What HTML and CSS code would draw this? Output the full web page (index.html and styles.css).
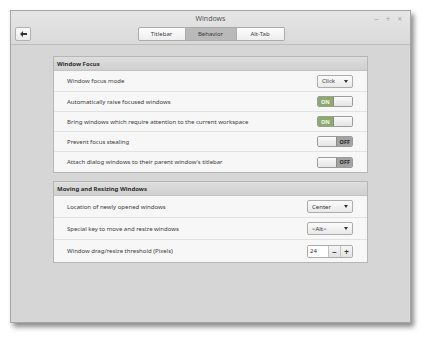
FILE: index.html
```html
<!DOCTYPE html>
<html lang="en">

    <head>
        <meta charset="UTF-8">
        <meta name="viewport" content="width=device-width, initial-scale=1.0">
        <title>Windows</title>
        <link rel="stylesheet" href="styles.css">
    </head>

    <body>
        <div id="window">
            <div id="header">
                <div class="title-row">
                    <span class="title">Windows</span>
                    <div class="wm-buttons">
                        <span>&minus;</span>
                        <span>+</span>
                        <span>&times;</span>
                    </div>
                </div>
                <div class="tool-row">
                    <button class="back-button">
                        <svg width="7" height="6" viewBox="0 0 7 6">
                            <path d="M0 3 L3 0 L3 2 L7 2 L7 4 L3 4 L3 6 Z" fill="#333"/>
                        </svg>
                    </button>
                    <div class="tabs">
                        <button class="tab">Titlebar</button>
                        <button class="tab active">Behavior</button>
                        <button class="tab">Alt-Tab</button>
                    </div>
                </div>
            </div>

            <div id="content">
                <div class="section">
                    <div class="section-title">Window Focus</div>
                    <div class="row tall">
                        <label>Window focus mode</label>
                        <div class="combo"><span>Click</span><span class="arrow"></span></div>
                    </div>
                    <div class="row">
                        <label>Automatically raise focused windows</label>
                        <div class="switch on"><span class="state">ON</span><span class="knob"></span></div>
                    </div>
                    <div class="row">
                        <label>Bring windows which require attention to the current workspace</label>
                        <div class="switch on"><span class="state">ON</span><span class="knob"></span></div>
                    </div>
                    <div class="row">
                        <label>Prevent focus stealing</label>
                        <div class="switch off"><span class="knob"></span><span class="state">OFF</span></div>
                    </div>
                    <div class="row">
                        <label>Attach dialog windows to their parent window's titlebar</label>
                        <div class="switch off"><span class="knob"></span><span class="state">OFF</span></div>
                    </div>
                </div>

                <div class="section">
                    <div class="section-title">Moving and Resizing Windows</div>
                    <div class="row wide">
                        <label>Location of newly opened windows</label>
                        <div class="combo long"><span>Center</span><span class="arrow"></span></div>
                    </div>
                    <div class="row wide">
                        <label>Special key to move and resize windows</label>
                        <div class="combo long"><span>&lt;Alt&gt;</span><span class="arrow"></span></div>
                    </div>
                    <div class="row wide">
                        <label>Window drag/resize threshold (Pixels)</label>
                        <div class="spin">
                            <span class="spin-value">24</span>
                            <span class="spin-button">&minus;</span>
                            <span class="spin-button">+</span>
                        </div>
                    </div>
                </div>
            </div>
        </div>
    </body>

</html>
```

FILE: styles.css
```css
html {
    height: 100%;
}

body {
    margin: 0px;
    width: 100%;
    height: 100%;
    overflow: hidden;
    background: #ffffff;
    font-family: "Noto Sans", sans-serif;
    font-size: 6px;
    color: #3a3a3a;
}

body * {
    box-sizing: border-box;
}

#window {
    display: flex;
    flex-direction: column;
    margin: 10px 0px 0px 10px;
    width: 401px;
    height: 313px;
    border: 1px solid #a6a6a6;
    background: #d6d6d6;
    box-shadow: 3px 4px 5px rgba(0, 0, 0, 0.45);
}

#header {
    height: 34px;
    background: linear-gradient(#e6e6e6, #d9d9d9);
    border-bottom: 1px solid #bdbdbd;
}

.title-row {
    position: relative;
    height: 15px;
    display: flex;
    align-items: center;
    justify-content: center;
}

.title {
    font-size: 7px;
    color: #555555;
}

.wm-buttons {
    position: absolute;
    right: 8px;
    top: 2px;
    display: flex;
    gap: 7px;
    font-size: 8px;
    color: #a4a4a4;
}

.tool-row {
    position: relative;
    height: 18px;
    display: flex;
    align-items: center;
    justify-content: center;
}

button {
    font: inherit;
    padding: 0px;
    margin: 0px;
    outline: none;
}

.back-button {
    position: absolute;
    left: 4px;
    top: 1px;
    width: 16px;
    height: 14px;
    display: flex;
    align-items: center;
    justify-content: center;
    border: 1px solid #b0b0b0;
    border-radius: 2px;
    background: linear-gradient(#fbfbfb, #ececec);
}

.tabs {
    display: flex;
    margin-top: -2px;
    margin-left: 1px;
}

.tab {
    width: 49px;
    height: 14px;
    border: 1px solid #ababab;
    border-left: none;
    background: linear-gradient(#fdfdfd, #eeeeee);
    color: #3c3c3c;
    font-size: 6px;
}

.tab:first-child {
    width: 48px;
    border-left: 1px solid #ababab;
    border-radius: 2px 0px 0px 2px;
}

.tab:last-child {
    width: 48px;
    border-radius: 0px 2px 2px 0px;
}

.tab.active {
    width: 51px;
    background: #b9b9b9;
    color: #3a3a3a;
}

#content {
    flex-grow: 1;
    padding: 11px 42px 0px 42px;
    display: flex;
    flex-direction: column;
    gap: 8px;
}

.section {
    border: 1px solid #b6b6b6;
    background: #f7f7f7;
}

.section-title {
    height: 14px;
    padding-left: 3px;
    display: flex;
    align-items: center;
    font-weight: bold;
    color: #2e2e2e;
    background: linear-gradient(#dedede, #d0d0d0);
    border-bottom: 1px solid #c4c4c4;
}

.row {
    height: 20px;
    display: flex;
    align-items: center;
    justify-content: space-between;
    padding: 0px 14px 0px 13px;
    border-bottom: 1px solid #e2e2e2;
}

.row:last-child {
    border-bottom: none;
}

.row.tall {
    height: 21px;
}

.row.wide {
    height: 22px;
}

.combo {
    width: 36px;
    height: 13px;
    display: flex;
    align-items: center;
    justify-content: space-between;
    padding: 0px 4px 0px 4px;
    border: 1px solid #acacac;
    border-radius: 2px;
    background: linear-gradient(#fbfbfb, #e9e9e9);
    color: #333333;
}

.combo.long {
    width: 46px;
}

.arrow {
    width: 0px;
    height: 0px;
    border-left: 2.5px solid transparent;
    border-right: 2.5px solid transparent;
    border-top: 3px solid #333333;
}

.switch {
    width: 36px;
    height: 11px;
    display: flex;
    border: 1px solid #9c9c9c;
    border-radius: 2px;
    overflow: hidden;
    font-weight: bold;
    font-size: 5.5px;
}

.switch .knob {
    width: 18px;
    background: linear-gradient(#fafafa, #e4e4e4);
}

.switch .state {
    flex-grow: 1;
    display: flex;
    align-items: center;
}

.switch.on .state {
    background: #8daa6c;
    color: #f2f7ec;
    padding-left: 3px;
    border-right: 1px solid #8a8a8a;
}

.switch.off .state {
    background: #a3a3a3;
    color: #262626;
    justify-content: flex-end;
    padding-right: 2px;
    border-left: 1px solid #8a8a8a;
}

.spin {
    width: 46px;
    height: 13px;
    display: flex;
    border: 1px solid #acacac;
    border-radius: 2px;
    overflow: hidden;
}

.spin-value {
    flex-grow: 1;
    display: flex;
    align-items: center;
    padding-left: 2px;
    background: #ffffff;
    color: #333333;
}

.spin-button {
    width: 12px;
    display: flex;
    align-items: center;
    justify-content: center;
    border-left: 1px solid #c2c2c2;
    background: linear-gradient(#f6f6f6, #e2e2e2);
    font-weight: bold;
    font-size: 8px;
    color: #333333;
}
```
